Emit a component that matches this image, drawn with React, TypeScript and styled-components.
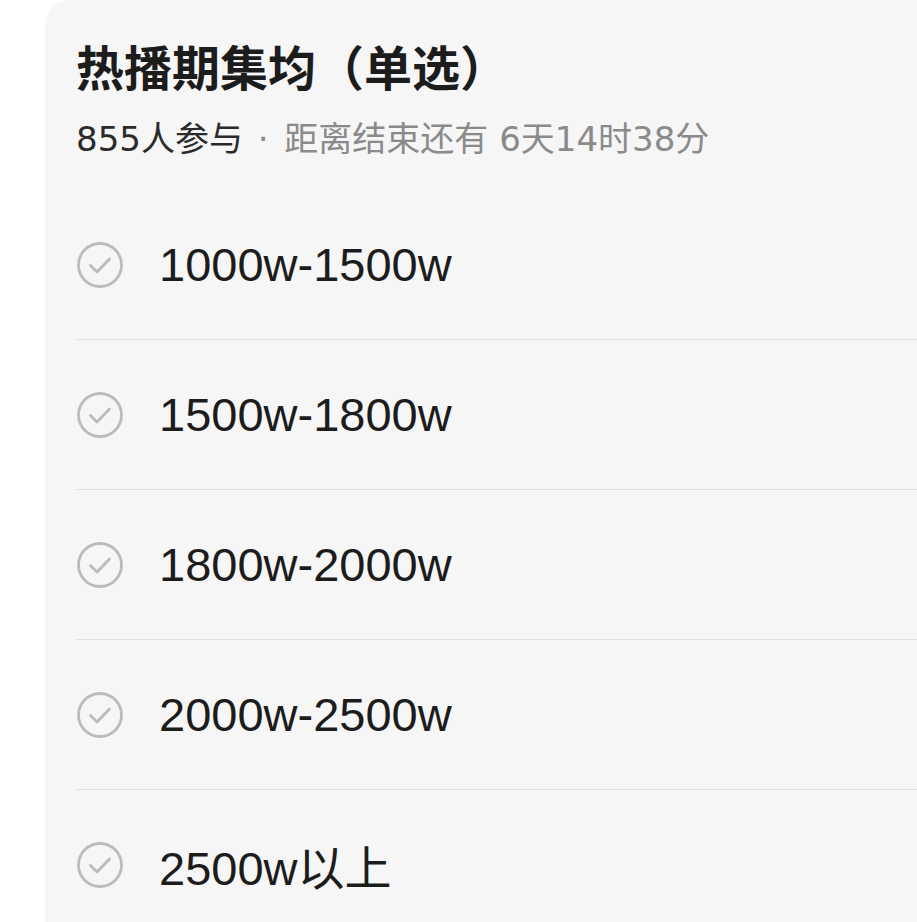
import React from "react";
import styled, { createGlobalStyle } from "styled-components";

const GlobalStyle = createGlobalStyle`
  html, body {
    margin: 0;
    padding: 0;
    background: #ffffff;
    overflow: hidden;
  }
  body {
    font-family: "Liberation Sans", "Noto Sans CJK SC", sans-serif;
  }
`;

const Page = styled.div`
  padding-left: 45px;
  height: 922px;
  overflow: hidden;
`;

const Card = styled.div`
  background: #f6f6f6;
  border-top-left-radius: 26px;
  margin-right: -40px;
  min-height: 960px;
  padding: 36px 0 0 31px;
`;

const Title = styled.h2`
  margin: 0;
  font-family: "Noto Sans CJK SC", sans-serif;
  font-size: 48px;
  line-height: 58px;
  font-weight: 700;
  color: #1c1c1c;
`;

const Meta = styled.div`
  margin-top: 25px;
  font-family: "DejaVu Sans", "Noto Sans CJK SC", sans-serif;
  font-size: 34px;
  line-height: 40px;
  color: #2a2a2a;
`;

const Muted = styled.span`
  color: #8a8a8a;
`;

const Dot = styled.span`
  margin: 0 5px 0 4px;
`;

const Options = styled.ul`
  list-style: none;
  margin: 31px 0 0;
  padding: 0;
`;

const Option = styled.li`
  display: flex;
  align-items: center;
  gap: 36px;
  height: 149px;
  border-bottom: 1px solid #e1e1e1;
  padding-left: 1px;
`;

const Label = styled.span`
  font-size: 47px;
  color: #1c1c1c;
`;

const CheckCircle: React.FC = () => (
  <svg width="46" height="46" viewBox="0 0 46 46" fill="none">
    <circle cx="23" cy="23" r="21.5" stroke="#bbbbbb" strokeWidth="2.8" />
    <path
      d="M13.5 23.5 L20 30 L32.5 17"
      stroke="#bbbbbb"
      strokeWidth="2.8"
      strokeLinecap="round"
      strokeLinejoin="round"
    />
  </svg>
);

const options = [
  "1000w-1500w",
  "1500w-1800w",
  "1800w-2000w",
  "2000w-2500w",
  "2500w以上",
];

const App: React.FC = () => {
  return (
    <>
      <GlobalStyle />
      <Page>
        <Card>
          <Title>热播期集均（单选）</Title>
          <Meta>
            855人参与
            <Muted>
              <Dot> · </Dot>距离结束还有 6天14时38分
            </Muted>
          </Meta>
          <Options>
            {options.map((o) => (
              <Option key={o}>
                <CheckCircle />
                <Label>{o}</Label>
              </Option>
            ))}
          </Options>
        </Card>
      </Page>
    </>
  );
};

export default App;
